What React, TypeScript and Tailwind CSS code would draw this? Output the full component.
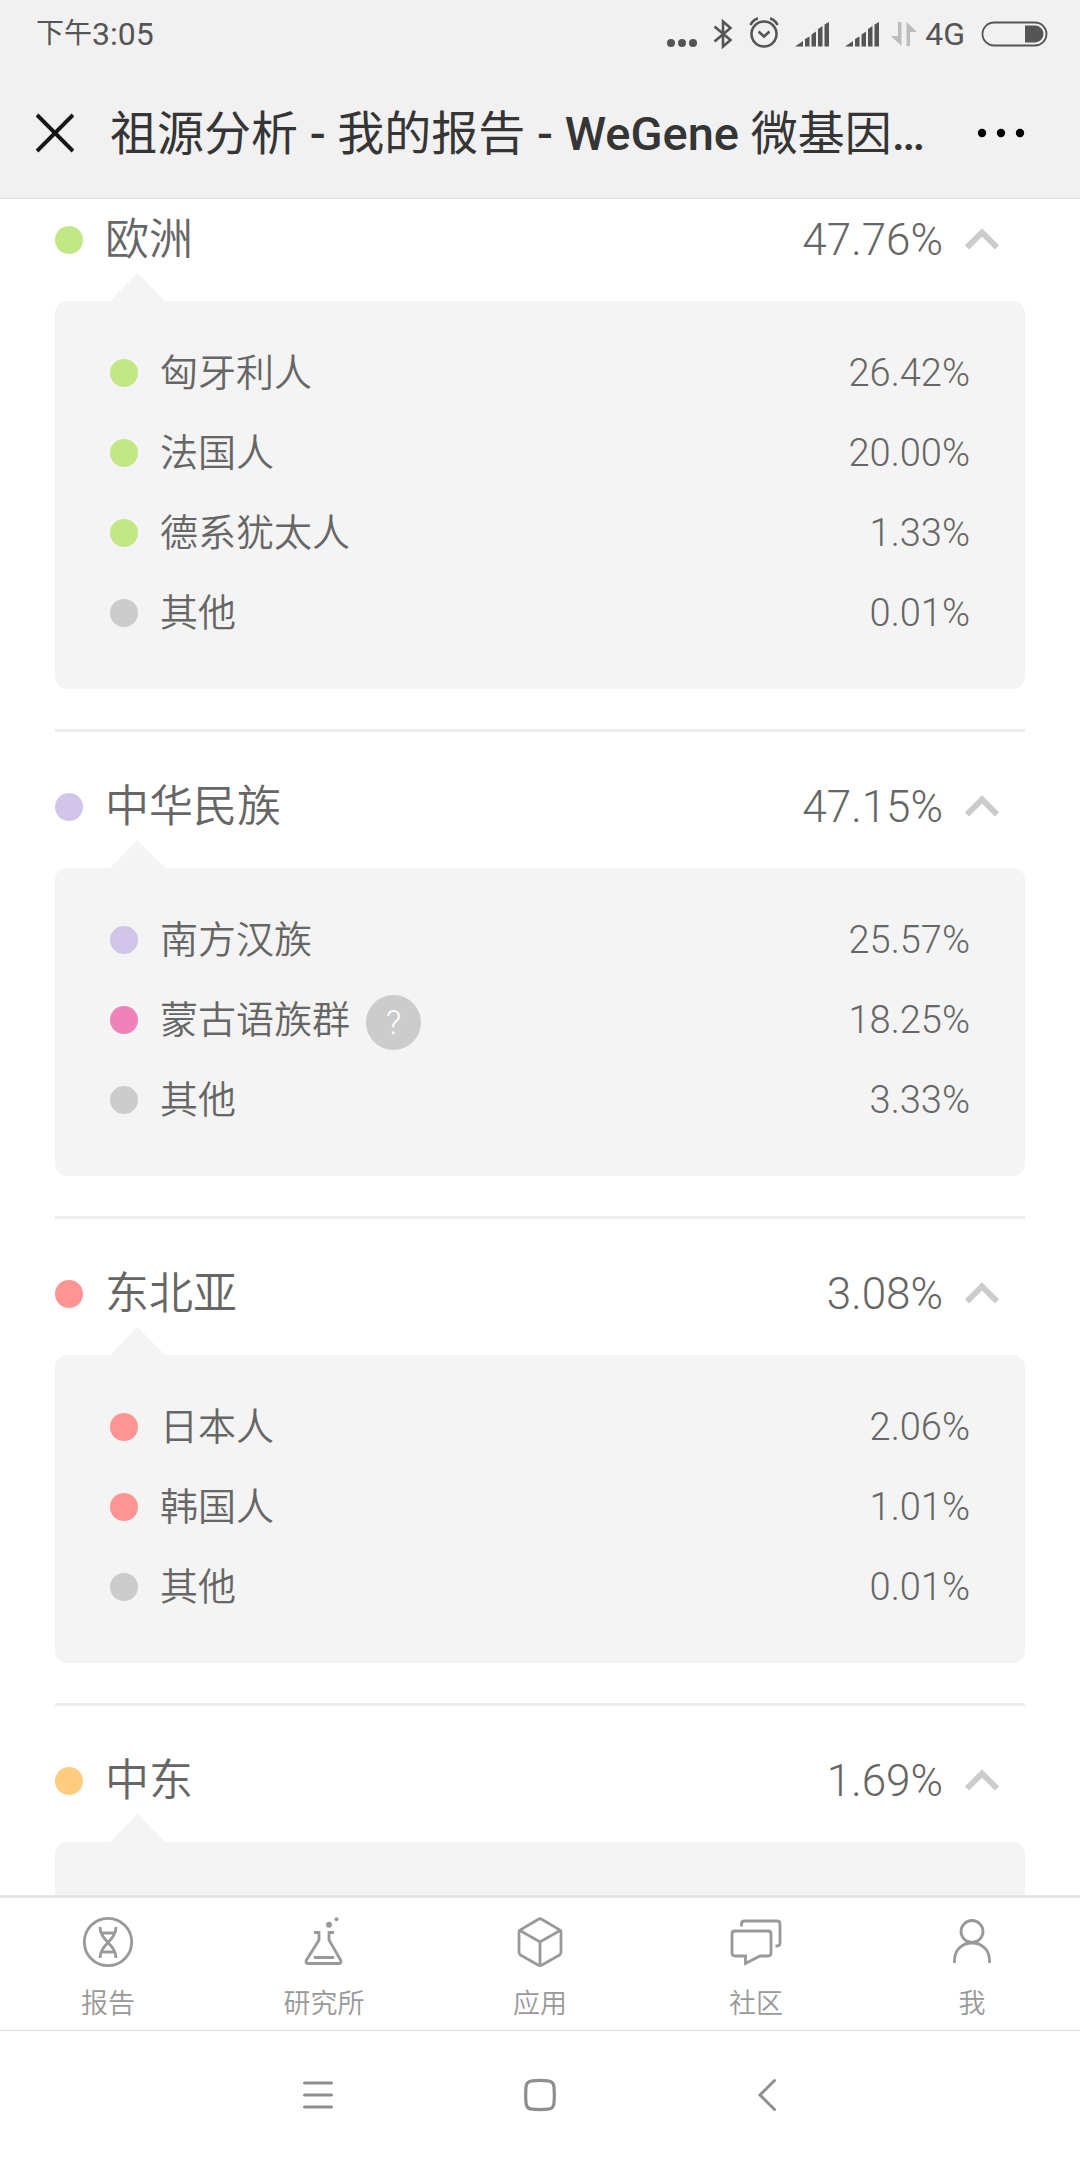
import React, { useState } from 'react';
import clsx from 'clsx';

interface Group {
  name: string;
  percent: string;
  dot: string;
  hint?: boolean;
}

interface Region extends Omit<Group, 'hint'> {
  groups: Group[];
}

const GREEN = 'bg-[#c1e885]';
const PURPLE = 'bg-[#d1c5ea]';
const RED = 'bg-[#ff9494]';
const GREY = 'bg-[#cccccc]';

const regions: Region[] = [
  {
    name: '欧洲',
    percent: '47.76%',
    dot: GREEN,
    groups: [
      { name: '匈牙利人', percent: '26.42%', dot: GREEN },
      { name: '法国人', percent: '20.00%', dot: GREEN },
      { name: '德系犹太人', percent: '1.33%', dot: GREEN },
      { name: '其他', percent: '0.01%', dot: GREY },
    ],
  },
  {
    name: '中华民族',
    percent: '47.15%',
    dot: PURPLE,
    groups: [
      { name: '南方汉族', percent: '25.57%', dot: PURPLE },
      { name: '蒙古语族群', percent: '18.25%', dot: 'bg-[#ef82b8]', hint: true },
      { name: '其他', percent: '3.33%', dot: GREY },
    ],
  },
  {
    name: '东北亚',
    percent: '3.08%',
    dot: RED,
    groups: [
      { name: '日本人', percent: '2.06%', dot: RED },
      { name: '韩国人', percent: '1.01%', dot: RED },
      { name: '其他', percent: '0.01%', dot: GREY },
    ],
  },
  {
    name: '中东',
    percent: '1.69%',
    dot: 'bg-[#ffcd80]',
    groups: [],
  },
];

function Signal() {
  return (
    <svg width="34" height="26" viewBox="0 0 34 26" fill="currentColor" aria-hidden="true">
      <path d="M0 25.500L8 20V25.500ZM10 18L14.500 15.500V25.500H10ZM16.500 13.500L21 10.500V25.500H16.500ZM23 8L27.500 5V25.500H23ZM29.500 3.500L34 1V25.500H29.500Z" />
    </svg>
  );
}

function StatusBar() {
  return (
    <div className="flex h-[68px] items-center justify-between pr-8 pl-9 text-[#555555]">
      <div className="flex items-center text-[28px] leading-8">
        下午<span className="text-[32px]">3:05</span>
      </div>
      <div className="flex items-center">
        <svg className="mr-4" width="30" height="56" viewBox="0 0 30 56" fill="currentColor" aria-hidden="true">
          <circle cx="4" cy="37" r="4" />
          <circle cx="15" cy="37" r="4" />
          <circle cx="26" cy="37" r="4" />
        </svg>
        <svg className="mr-4" width="20" height="30" viewBox="0 0 20 30" fill="none" stroke="currentColor" strokeWidth="2.600" aria-hidden="true">
          <path d="M1.500 7.500L17.500 21L10 27.500V2.500L17.500 9L1.500 22.500" />
        </svg>
        <svg className="mr-4" width="30" height="34" viewBox="0 0 30 34" fill="none" stroke="currentColor" strokeWidth="2.600" aria-hidden="true">
          <circle cx="15" cy="17" r="12.500" />
          <path d="M9.500 14.500L15 19.500L20.500 14.500" />
          <path d="M1.500 8C3 4.500 5.500 2.500 9 1.500M28.500 8C27 4.500 24.500 2.500 21 1.500" />
        </svg>
        <Signal />
        <span className="w-4" />
        <Signal />
        <svg className="mr-2 ml-3" width="26" height="26" viewBox="0 0 26 26" fill="#bcbcbc" aria-hidden="true">
          <path d="M7 1H10.500V25L0 15H7ZM15.500 25V1L26 11H19V25Z" />
        </svg>
        <span className="text-[32px] leading-8">4G</span>
        <svg className="ml-4" width="67" height="26" viewBox="0 0 67 26" aria-hidden="true">
          <rect x="1.500" y="1.500" width="64" height="23" rx="11.500" fill="none" stroke="currentColor" strokeWidth="1.800" />
          <path d="M44 4.500H54A8.500 8.500 0 0 1 54 21.500H44Z" fill="currentColor" />
        </svg>
      </div>
    </div>
  );
}

function TitleBar() {
  return (
    <div className="flex h-[130px] items-center pr-[54px] pl-9">
      <button type="button" aria-label="关闭">
        <svg width="38" height="40" viewBox="0 0 38 40" stroke="#161616" strokeWidth="4" aria-hidden="true">
          <path d="M1 2L37 38M37 2L1 38" />
        </svg>
      </button>
      <h1 className="ml-9 flex-1 truncate pt-0.5 text-[47px] leading-[70px] text-[#353535]">
        祖源分析 <b className="font-medium">-</b> 我的报告 <b className="font-medium">- WeGene</b> 微基因<b className="font-medium">…</b>
      </h1>
      <button type="button" aria-label="更多">
        <svg width="50" height="12" viewBox="0 0 50 12" aria-hidden="true">
          <circle cx="6" cy="6" r="4.200" />
          <circle cx="25" cy="6" r="4.200" />
          <circle cx="44" cy="6" r="4.200" />
        </svg>
      </button>
    </div>
  );
}

function GroupRow({ group }: { group: Group }) {
  return (
    <li className="flex h-20 items-center text-[38px]">
      <span className={clsx('size-7 rounded-full', group.dot)} />
      <span className="ml-[22px] font-[350]">{group.name}</span>
      {group.hint && (
        <button type="button" aria-label="说明" className="mt-1 ml-4 size-[55px] rounded-full bg-[#cccccc] text-[34px] text-white">
          ?
        </button>
      )}
      <span className="ml-auto">{group.percent}</span>
    </li>
  );
}

function RegionSection({ region }: { region: Region }) {
  const [open, setOpen] = useState(true);

  return (
    <section className="border-b-3 border-[#ebeef1] pt-[42px] pb-10">
      <button
        type="button"
        aria-expanded={open}
        onClick={() => setOpen(!open)}
        className="flex h-[66px] w-full items-center pr-[26px] text-[44px]"
      >
        <span className={clsx('size-7 rounded-full', region.dot)} />
        <span className="ml-[22px] font-[350]">{region.name}</span>
        <span className="ml-auto">{region.percent}</span>
        <svg className="mb-0.5 ml-[22px]" width="34" height="22" viewBox="0 0 34 22" fill="none" stroke="#cccccc" strokeWidth="6" aria-hidden="true">
          <path d="M2 19.500L17 4.500L32 19.500" />
        </svg>
      </button>
      {open && (
        <>
          <svg className="ml-[55px]" width="55" height="28" viewBox="0 0 55 28" fill="#f4f4f4" aria-hidden="true">
            <path d="M27.500 0L55 28H0Z" />
          </svg>
          <ul className="rounded-xl bg-[#f4f4f4] px-[55px] pt-8 pb-9">
            {region.groups.map((group) => (
              <GroupRow key={group.name} group={group} />
            ))}
          </ul>
        </>
      )}
    </section>
  );
}

const tabs = [
  {
    label: '报告',
    icon: (
      <>
        <circle cx="26" cy="26" r="23.700" />
        <path d="M18 11C18 25 34 28 34 42M34 11C34 25 18 28 18 42M19.500 17H32.500M19.500 36H32.500" />
      </>
    ),
  },
  {
    label: '研究所',
    icon: (
      <>
        <path d="M16 16.500H21V24L8.500 44C7.500 46 8 47.500 10 47.500H41C43 47.500 43.500 46 42.500 44L31 24V16.500H36" />
        <path d="M17 41.500H35" strokeLinecap="round" />
        <circle cx="31" cy="8.700" r="3" fill="currentColor" stroke="none" />
        <circle cx="38.500" cy="3.300" r="2" fill="currentColor" stroke="none" />
      </>
    ),
  },
  {
    label: '应用',
    icon: (
      <path d="M28 3.500L46 14Q47 15 47 16.500V36Q47 38 45.500 39L28 49Q26 50 24 49L6.500 39Q5 38 5 36V16.500Q5 15 6 14L24 3.500Q26 2 28 3.500ZM6 14.500L26 26L46 14.500M26 26V49" />
    ),
  },
  {
    label: '社区',
    icon: (
      <>
        <path d="M5 15H38Q41 15 41 18V37Q41 40 38 40H30L15.500 47.500V40H5Q2 40 2 37V18Q2 15 5 15Z" />
        <path d="M11.500 10.500V8Q11.500 5 14.500 5H47Q50 5 50 8V27Q50 30 47 30H45.500" />
      </>
    ),
  },
  {
    label: '我',
    icon: (
      <>
        <circle cx="26" cy="15.500" r="11" />
        <path d="M8.500 47V44.500C8.500 34 16 27 26 27S43.500 34 43.500 44.500V47" />
      </>
    ),
  },
];

function TabBar() {
  return (
    <nav className="flex border-t-3 border-[#e3e8e6] bg-white">
      {tabs.map(({ label, icon }) => (
        <a key={label} href="#" className="flex h-[132px] flex-1 flex-col items-center pt-[18px] text-[27px] leading-10 font-[350] text-[#999999]">
          <svg width="52" height="52" viewBox="0 0 52 52" fill="none" stroke="currentColor" strokeWidth="2.800" aria-hidden="true">
            {icon}
          </svg>
          <span className="mt-4">{label}</span>
        </a>
      ))}
    </nav>
  );
}

function SystemNav() {
  return (
    <div className="flex h-[130px] items-center justify-center gap-[190px] border-t border-[#dddddd] bg-white pb-0.5 text-[#8e8e8e]">
      <button type="button" aria-label="菜单">
        <svg width="32" height="34" viewBox="0 0 32 34" stroke="currentColor" strokeWidth="3" strokeLinecap="round" aria-hidden="true">
          <path d="M2.500 5H29.500M2.500 17H29.500M2.500 29H29.500" />
        </svg>
      </button>
      <button type="button" aria-label="主页">
        <svg width="32" height="34" viewBox="0 0 32 34" fill="none" stroke="currentColor" strokeWidth="3.200" aria-hidden="true">
          <path d="M8 2.800Q16 2 24 2.800Q29.500 3.200 30 9Q30.600 17 30 25Q29.500 30.800 24 31.200Q16 32 8 31.200Q2.500 30.800 2 25Q1.400 17 2 9Q2.500 3.200 8 2.800Z" />
        </svg>
      </button>
      <button type="button" aria-label="返回">
        <svg width="32" height="34" viewBox="0 0 32 34" fill="none" stroke="currentColor" strokeWidth="3" strokeLinecap="round" aria-hidden="true">
          <path d="M28.500 2.500L14 17L28.500 31.500" />
        </svg>
      </button>
    </div>
  );
}

export default function App() {
  return (
    <div className="flex h-screen flex-col bg-white font-[Roboto,'Noto_Sans_CJK_SC',sans-serif]">
      <header className="border-b border-[#dddddd] bg-[#f1f1f1]">
        <StatusBar />
        <TitleBar />
      </header>
      <main className="min-h-0 flex-1 overflow-hidden px-[55px] font-light text-[#666666]">
        <div className="-mt-[34px]">
          {regions.map((region) => (
            <RegionSection key={region.name} region={region} />
          ))}
        </div>
      </main>
      <TabBar />
      <SystemNav />
    </div>
  );
}
